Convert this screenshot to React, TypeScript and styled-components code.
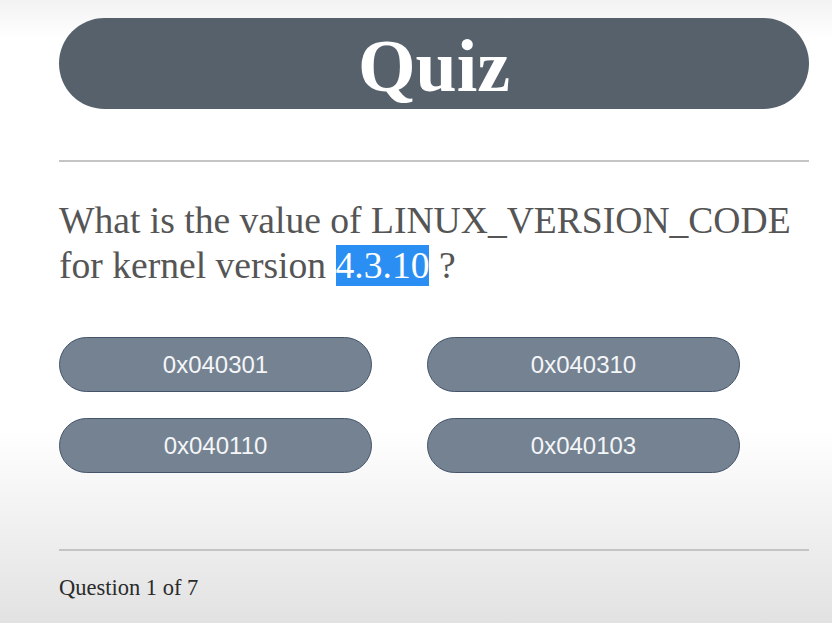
import styled, { createGlobalStyle } from "styled-components";

const GlobalStyle = createGlobalStyle`
  html, body {
    margin: 0;
    padding: 0;
  }
  body {
    min-height: 623px;
    background: linear-gradient(
      to bottom,
      #f3f3f3 0px,
      #ffffff 40px,
      #ffffff 430px,
      #f1f1f1 520px,
      #e2e2e2 623px
    );
    font-family: "Liberation Serif", "Times New Roman", serif;
  }
`;

const Page = styled.main`
  width: 750px;
  padding: 18px 0 0 59px;
`;

const Header = styled.header`
  height: 91px;
  border-radius: 46px;
  background: #57616c;
  display: flex;
  align-items: center;
  justify-content: center;
`;

const Title = styled.h1`
  margin: 0;
  color: #ffffff;
  font-size: 74px;
  font-weight: bold;
  line-height: 1;
  padding-top: 4px;
`;

const Rule = styled.hr<{ $gap: number }>`
  margin: ${(p) => p.$gap}px 0 0;
  border: none;
  border-top: 2px solid #c4c4c4;
  height: 0;
`;

const Question = styled.p`
  margin: 36px 0 0;
  color: #555555;
  font-size: 37.6px;
  line-height: 45px;
`;

const Highlight = styled.span`
  background: #2b8ef2;
  color: #ffffff;
`;

const Answers = styled.div`
  margin-top: 49px;
  display: grid;
  grid-template-columns: 313px 313px;
  column-gap: 55px;
  row-gap: 26px;
`;

const AnswerButton = styled.button`
  height: 55px;
  border-radius: 28px;
  border: 1px solid #44546a;
  background: #748292;
  color: #f4f6f8;
  font-family: "Liberation Sans", Arial, sans-serif;
  font-size: 24px;
  display: flex;
  align-items: center;
  justify-content: center;
  padding: 0;
  cursor: pointer;
`;

const Footer = styled.footer`
  margin-top: 24px;
  color: #2b2b2b;
  font-size: 22.5px;
`;

const answers = ["0x040301", "0x040310", "0x040110", "0x040103"];

export default function App() {
  return (
    <>
      <GlobalStyle />
      <Page>
        <Header>
          <Title>Quiz</Title>
        </Header>
        <Rule $gap={51} />
        <Question>
          What is the value of LINUX_VERSION_CODE for kernel version{" "}
          <Highlight>4.3.10</Highlight> ?
        </Question>
        <Answers>
          {answers.map((a) => (
            <AnswerButton key={a}>{a}</AnswerButton>
          ))}
        </Answers>
        <Rule $gap={76} />
        <Footer>Question 1 of 7</Footer>
      </Page>
    </>
  );
}
